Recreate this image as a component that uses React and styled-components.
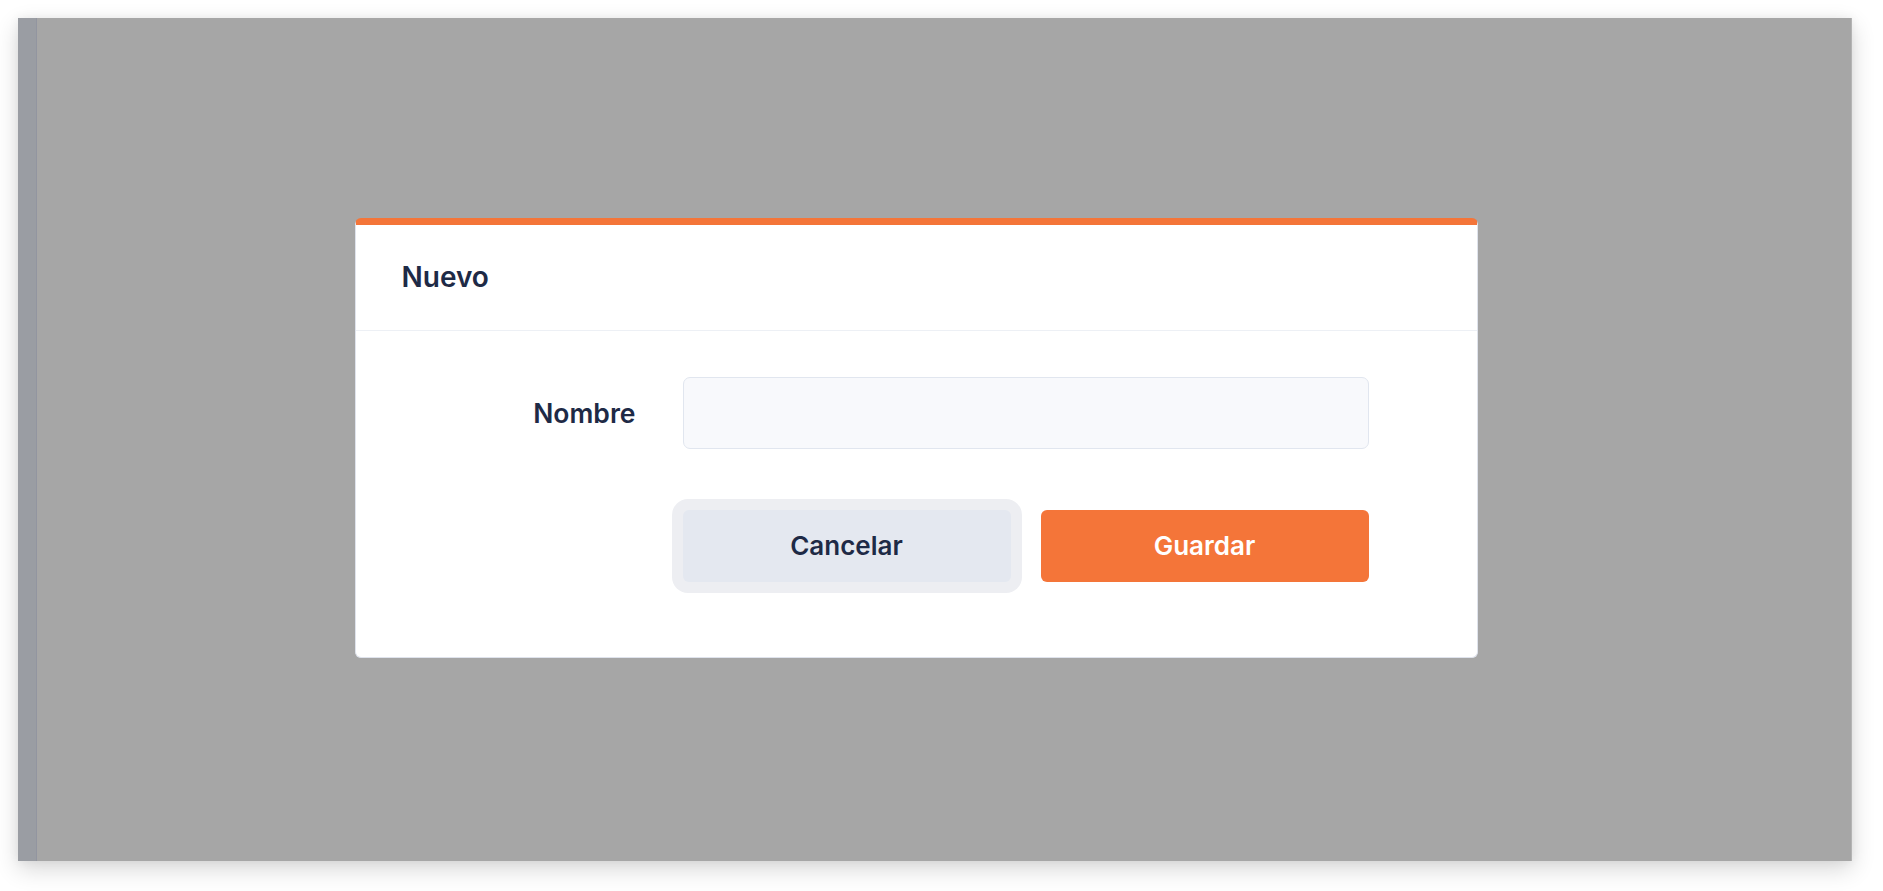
import React, { useState } from 'react';
import styled, { createGlobalStyle } from 'styled-components';

const GlobalStyle = createGlobalStyle`
html, body {
  margin: 0;
  padding: 0;
  background: #ffffff;
  font-family: Inter, "Noto Sans", "Liberation Sans", sans-serif;
}
`

const Page = styled.div`
width: 100%;
height: 891px;
padding: 18px 31px 30px 18px;
box-sizing: border-box;
`

const Frame = styled.div`
display: flex;
width: 1834px;
height: 843px;
box-shadow: 0 8px 22px rgba(0,0,0,0.16), 0 0 10px rgba(0,0,0,0.06);
overflow: hidden;
`

const SideStrip = styled.div`
width: 18px;
flex-shrink: 0;
background: #9a9da3;
border-right: 1px solid #9295a0;
`

const Backdrop = styled.div`
flex: 1;
display: flex;
align-items: center;
justify-content: center;
padding: 0 56px 4px 0;
background: #a6a6a6;
border-right: 1px solid #b4b4b4;
`

const Modal = styled.div`
width: 1123px;
box-sizing: border-box;
background: #ffffff;
border: 1px solid #dfe3ec;
border-top: 7px solid #f47539;
border-radius: 6px;
`

const Header = styled.div`
height: 105px;
display: flex;
align-items: center;
padding: 0 46px;
border-bottom: 1px solid #edf0f5;
`

const Title = styled.h2`
margin: 0;
font-size: 28px;
font-weight: 600;
color: #1e2a46;
`

const Body = styled.div`
display: flex;
flex-direction: column;
gap: 61px;
padding: 46px 108px 75px 0;
`

const FormRow = styled.div`
display: grid;
grid-template-columns: 1fr 686px;
column-gap: 47px;
align-items: center;
`

const Label = styled.label`
text-align: right;
font-size: 26.5px;
font-weight: 600;
color: #1e2a46;
`

const Input = styled.input`
height: 72px;
box-sizing: border-box;
border: 1px solid #e1e6ef;
border-radius: 7px;
background: #f8f9fc;
padding: 0 20px;
font-family: inherit;
font-size: 24px;
color: #1e2a46;
outline: none;
`

const Actions = styled.div`
display: grid;
grid-template-columns: 1fr 1fr;
gap: 30px;
`

const Button = styled.button`
height: 72px;
border: none;
border-radius: 6px;
font-family: inherit;
font-size: 26px;
font-weight: 600;
cursor: pointer;
background: ${p => p.$primary ? '#f47539' : '#e4e8f0'};
color: ${p => p.$primary ? '#ffffff' : '#1e2a46'};
box-shadow: ${p => p.$focused ? '0 0 0 11px #edeef2' : 'none'};
`

function App() {
  const [name, setName] = useState('')

  return (
    <Page>
      <GlobalStyle />
      <Frame>
        <SideStrip />
        <Backdrop>
          <Modal>
            <Header>
              <Title>Nuevo</Title>
            </Header>
            <Body>
              <FormRow>
                <Label htmlFor="nombre">Nombre</Label>
                <Input id="nombre" value={name} onChange={(e) => setName(e.target.value)} />
              </FormRow>
              <FormRow>
                <span />
                <Actions>
                  <Button $focused>Cancelar</Button>
                  <Button $primary>Guardar</Button>
                </Actions>
              </FormRow>
            </Body>
          </Modal>
        </Backdrop>
      </Frame>
    </Page>
  );
}

export default App;
